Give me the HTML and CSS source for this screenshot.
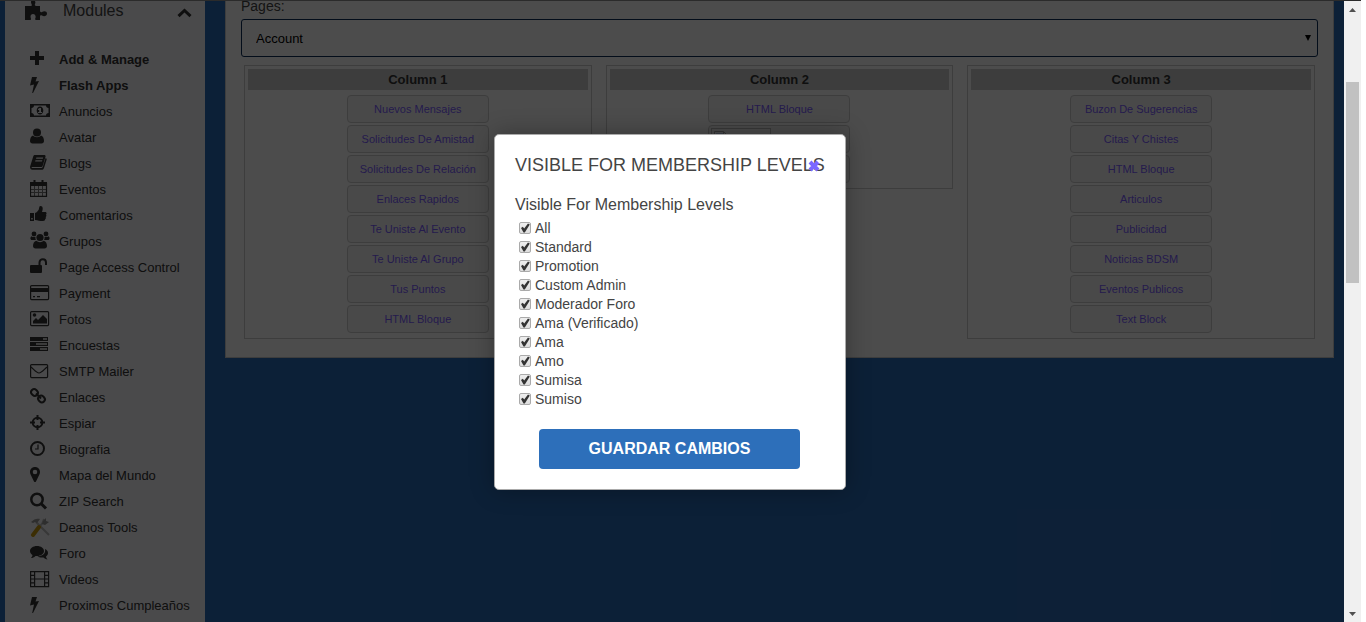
FILE: index.html
```html
<!DOCTYPE html>
<html lang="es">
<head>
<meta charset="utf-8">
<title>Modules</title>
<link rel="stylesheet" href="styles.css">
</head>
<body>
<div class="window">
<div class="page">
  <aside class="sidebar">
    <div class="side-head">
      <svg width="23" height="20" viewBox="0 0 23 20"><path d="M0 5h6c1 0 1-1 .5-2C5.500 1 6-1 8-1s3 2 2 4c-.5 1 0 2 1 2h4v5c0 1 1 1.500 2 1 2-1.500 5-1 5 1.500S19 16 17 14.500c-1-.6-2 0-2 1V19h-4c-1 0-1-1-.6-2 .8-2-.4-4-2.400-4s-3 2-2.200 4c.4 1 .2 2-.8 2H0z"/></svg>
      <span>Modules</span>
      <svg class="chev" width="15" height="10" viewBox="0 0 15 10"><path d="M1.500 8.200 7.500 2.500l6 5.700" class="line w3"/></svg>
    </div>
    <nav class="menu">
      <a href="#" class="strong"><svg viewBox="0 0 20 20"><path d="M5 2h4v5h5v4H9v5H5v-5H0V7h5z"/></svg>Add &amp; Manage</a>
      <a href="#" class="strong"><svg viewBox="0 0 20 20"><path d="M2 2h5L5.500 6.500 9 6 3 18h-.8L4 9.500 0 10.500z"/></svg>Flash Apps</a>
      <a href="#"><svg viewBox="0 0 20 20"><path fill-rule="evenodd" d="M0 3h20v13H0zM4 4.500C4 6 3 7 1.500 7v5c1.500 0 2.500 1 2.500 2.500h12c0-1.500 1-2.500 2.500-2.500V7C17 7 16 6 16 4.500z"/><path fill-rule="evenodd" d="M10 5.500c2 0 3.300 1.800 3.300 4s-1.300 4-3.300 4-3.300-1.800-3.300-4 1.300-4 3.300-4M9.500 7 8 8v1h1.200v2H8v1h4v-1h-1V7z"/></svg>Anuncios</a>
      <a href="#"><svg viewBox="0 0 20 20"><circle cx="7" cy="5.500" r="4"/><path d="M3 8.500c2 2.300 6 2.300 8 0 2 .5 3 3 3 5.500 0 1.500-1 2.500-2.500 2.500h-9C1 16.500 0 15.500 0 14c0-2.500 1-5 3-5.500"/></svg>Avatar</a>
      <a href="#"><svg viewBox="0 0 20 20"><path fill-rule="evenodd" d="M5 2h9c1.200 0 1.800.8 1.500 1.800l-2.700 8.700c-.3 1-1 1.500-2 1.500H2c-.8 0-.6.9.2.9h9c.8 0 1.300-.4 1.600-1.200L15.600 5c1 .4 1.200 1 1 1.800L14 14.900c-.4 1.200-1.300 1.900-2.500 1.900H2.300C.8 16.800-.2 15 .1 13.500L3.300 3.300C3.600 2.400 4.200 2 5 2m1.400 2.600L6 5.800h6.800l.4-1.200zM5.500 7.200l-.4 1.200h6.800l.4-1.200z"/></svg>Blogs</a>
      <a href="#"><svg viewBox="0 0 20 20"><path d="M0 3h17v4H0z"/><path class="line thin" d="M4.500 7v10M8.500 7v10M12.500 7v10M0 10.500h17M0 13.500h17"/><path class="line w1" d="M.5 4v13.300h16V4"/><path class="line w2" d="M4.500 1v4M12.500 1v4"/></svg>Eventos</a>
      <a href="#"><svg viewBox="0 0 20 20"><path fill-rule="evenodd" d="M0 8h4v8H0zM1.200 13v1.500h1.500V13zM5 8c2-.3 3-2.300 3.800-3.500C9.300 3 9 1 10.500 1c2.800 0 2.500 3.500 1.500 6h3c2 0 1.800 2 1 2.500.7 1 .3 2-.3 2.500.4 1 0 2-.6 2.300 0 1.200-.5 1.700-2.100 1.700-3.500 0-5-.5-8-1z"/></svg>Comentarios</a>
      <a href="#"><svg viewBox="0 0 20 20"><circle cx="4" cy="3" r="2.400"/><circle cx="16" cy="3" r="2.400"/><path d="M1.500 5.200c1.300 1 3 1.100 4 .5C5.300 7.500 5.500 8.300 6 9H2C0 9 0 6.200 1.500 5.200M18.500 5.200c-1.300 1-3 1.100-4 .5.200 1.800 0 2.600-.5 3.300h4c2 0 2-2.800.5-3.800"/><circle cx="10" cy="6.500" r="3.600"/><path d="M6.200 9.800c2.300 1.900 5.300 1.900 7.600 0 2 .5 3.200 2.700 3.200 5.200 0 1.500-1 2.500-2.500 2.500h-9C4 17.500 3 16.500 3 15c0-2.500 1.200-4.700 3.200-5.200"/></svg>Grupos</a>
      <a href="#"><svg viewBox="0 0 20 20"><rect y="8" width="12" height="8" rx="1"/><path class="line w2" d="M9.500 8V5.500c0-4.300 6.500-4.300 6.500 0V8"/></svg>Page Access Control</a>
      <a href="#"><svg viewBox="0 0 20 20"><rect class="line w1" x=".6" y="2.600" width="18" height="14" rx="1"/><path d="M0 5h19v4H0zM3 13h2v1.200H3zM7 13h3v1.200H7z"/></svg>Payment</a>
      <a href="#"><svg viewBox="0 0 20 20"><rect class="line w1" x=".6" y="2.600" width="18" height="14" rx="1"/><circle cx="4.500" cy="6" r="1.800"/><path d="M3 14.500V12l3-3 2 2 5-5 4 4v4.500z"/></svg>Fotos</a>
      <a href="#"><svg viewBox="0 0 20 20"><path fill-rule="evenodd" d="M0 2h18v4H0zm13 1.200v1.500h4V3.200zM0 7h18v4H0zm6 1.200v1.500h11V8.200zM0 12h18v4H0zm10 1.200v1.500h7v-1.500z"/></svg>Encuestas</a>
      <a href="#"><svg viewBox="0 0 20 20"><rect class="line w1" x=".6" y="3.600" width="17" height="13" rx="1"/><path class="line w1" d="M1 6c3 2.500 5.500 6 8 6s5-3.500 8-6"/></svg>SMTP Mailer</a>
      <a href="#"><svg viewBox="0 0 20 20"><rect class="line w2" x="1" y="2.500" width="7" height="6" rx="3" transform="rotate(45 4.500 5.500)"/><rect class="line w2" x="8" y="9" width="7" height="6" rx="3" transform="rotate(45 11.500 12)"/><path class="line w2" d="m6 6.500 5 5"/></svg>Enlaces</a>
      <a href="#"><svg viewBox="0 0 20 20"><circle class="line w2" cx="7.500" cy="9.500" r="4.800"/><path class="line w2" d="M7.500 2v5M7.500 12v5M0 9.500h5M10 9.500h5"/></svg>Espiar</a>
      <a href="#"><svg viewBox="0 0 20 20"><circle class="line w2" cx="7.500" cy="9.500" r="6.500"/><path class="line w1" d="M8 5.500V10H5"/></svg>Biografia</a>
      <a href="#"><svg viewBox="0 0 20 20"><path fill-rule="evenodd" d="M5 2c3 0 5 2.200 5 5 0 1-.2 1.800-.6 2.500L6 16.500c-.4.800-1.600.8-2 0L.6 9.500C.2 8.800 0 8 0 7c0-2.800 2-5 5-5m0 2.700a2.300 2.300 0 1 0 0 4.600 2.300 2.300 0 0 0 0-4.600"/></svg>Mapa del Mundo</a>
      <a href="#"><svg viewBox="0 0 20 20"><circle class="line zoom" cx="7" cy="8.500" r="5.700"/><path class="line w3" d="m11 12.500 5 5"/></svg>ZIP Search</a>
      <a href="#"><svg viewBox="0 0 20 20"><path class="tool-grey" d="M14 2 12.500 6 3 18M6 5l13 13"/><path class="tool-head" d="M1 5c3-3 6-4 9-3L7 6 5 5 3 6zM13 4l3-3v3l3 1-4 3-3-1z"/><path class="tool-gold" d="m9 10-6 8"/></svg>Deanos Tools</a>
      <a href="#"><svg viewBox="0 0 20 20"><path d="M7 3c4 0 7 2.200 7 5s-3 5-7 5l-1.500-.1C4 14.300 2.500 14.800 1 15c1-1 1.500-2 1.500-3C1 11 0 9.600 0 8c0-2.800 3-5 7-5"/><path d="M15 6c2 1 3 2.300 3 4 0 1.500-.8 2.500-2 3.500 0 1 .5 2 1.500 3-1.500-.2-3-.9-4-2-2 .3-4.500 0-6-1C12 13 16 11 15 6"/></svg>Foro</a>
      <a href="#"><svg viewBox="0 0 20 20"><path class="line w1" d="M.6 2.600h18v15H.6zM4.600 2.600v15M14.600 2.600v15M4.600 10h10M1 6.400h3.500M1 10h3.500M1 13.800h3.500M15 6.400h3.500M15 10h3.500M15 13.800h3.500"/></svg>Videos</a>
      <a href="#"><svg viewBox="0 0 20 20"><path d="M2 2h5L5.500 6.500 9 6 3 18h-.8L4 9.500 0 10.500z"/></svg>Proximos Cumpleaños</a>
    </nav>
  </aside>
  <main class="panel">
    <label class="pages-label" for="pages">Pages:</label>
    <div class="select-wrap"><select id="pages"><option>Account</option></select></div>
    <div class="columns">
      <section class="column"><h2>Column 1</h2>
        <button>Nuevos Mensajes</button><button>Solicitudes De Amistad</button><button>Solicitudes De Relación</button><button>Enlaces Rapidos</button><button>Te Uniste Al Evento</button><button>Te Uniste Al Grupo</button><button>Tus Puntos</button><button>HTML Bloque</button>
      </section>
      <section class="column"><h2>Column 2</h2>
        <button>HTML Bloque</button>
        <button class="with-image"><span class="missing"><svg width="16" height="16" viewBox="0 0 16 16"><path class="doc" d="M1.500 1.500h9l4 4v9h-13z"/><path class="sky" d="M3 3h7v8H3z"/><path class="doc" d="M10.500 1.500v4h4"/></svg></span></button>
        <button></button>
      </section>
      <section class="column"><h2>Column 3</h2>
        <button>Buzon De Sugerencias</button><button>Citas Y Chistes</button><button>HTML Bloque</button><button>Articulos</button><button>Publicidad</button><button>Noticias BDSM</button><button>Eventos Publicos</button><button>Text Block</button>
      </section>
    </div>
  </main>
  <div class="overlay">
    <form class="modal" role="dialog" aria-labelledby="dlg-title">
      <h1 id="dlg-title">VISIBLE FOR MEMBERSHIP LEVELS</h1>
      <button type="button" class="close" aria-label="Cerrar"><svg width="12" height="12" viewBox="0 0 12 12"><path d="m2 2 8 8M10 2l-8 8"/></svg></button>
      <fieldset>
        <legend>Visible For Membership Levels</legend>
        <label><input type="checkbox" checked>All</label>
        <label><input type="checkbox" checked>Standard</label>
        <label><input type="checkbox" checked>Promotion</label>
        <label><input type="checkbox" checked>Custom Admin</label>
        <label><input type="checkbox" checked>Moderador Foro</label>
        <label><input type="checkbox" checked>Ama (Verificado)</label>
        <label><input type="checkbox" checked>Ama</label>
        <label><input type="checkbox" checked>Amo</label>
        <label><input type="checkbox" checked>Sumisa</label>
        <label><input type="checkbox" checked>Sumiso</label>
      </fieldset>
      <button type="button" class="save">GUARDAR CAMBIOS</button>
    </form>
  </div>
</div>
<div class="scrollbar">
  <svg width="17" height="17" viewBox="0 0 17 17"><path d="M5 11h7L8.500 7z"/></svg>
  <div class="track"><div class="thumb"></div></div>
  <svg width="17" height="17" viewBox="0 0 17 17"><path d="M5 7h7l-3.500 4z"/></svg>
</div>
</div>
</body>
</html>
```
FILE: styles.css
```css
* { box-sizing: border-box; }
body {
  margin: 0;
  background: #fff;
  font-family: "Liberation Sans", Arial, sans-serif;
  color: #444;
}
.window {
  display: flex;
  height: 100vh;
  margin-right: 5px;
  border-top: 1px solid #2b2b2b;
  overflow: hidden;
}
.page {
  position: relative;
  flex: 1;
  display: flex;
  align-items: flex-start;
  gap: 20px;
  padding: 0 10px 0 5px;
  background: #2a6cba;
  overflow: hidden;
}
button, select { font-family: inherit; }

/* Sidebar */
.sidebar {
  align-self: stretch;
  width: 200px;
  flex: none;
  background: #f7f7fa;
}
.side-head {
  display: flex;
  align-items: center;
  height: 20px;
  margin-bottom: 25px;
  padding: 0 13px 0 20px;
  font-size: 16px;
}
.side-head span { flex: 1; margin-left: 15px; }
.side-head .chev { margin-top: 4px; }
.menu a {
  display: flex;
  align-items: center;
  gap: 9px;
  height: 26px;
  padding-left: 25px;
  font-size: 13px;
  color: #333;
  text-decoration: none;
  white-space: nowrap;
}
.menu svg { width: 20px; height: 20px; flex: none; }
.menu .strong { font-weight: bold; }
.sidebar svg { fill: #333; }
.sidebar svg .line { fill: none; stroke: #333; }
.sidebar svg .thin { stroke: #777; stroke-width: 1; }
.sidebar svg .w1 { stroke-width: 1.2; }
.sidebar svg .w2 { stroke-width: 2; }
.sidebar svg .zoom { stroke-width: 2.500; }
.sidebar svg .w3 { stroke-width: 3; }
.sidebar svg .tool-grey { fill: none; stroke: #bbb; stroke-width: 2; }
.sidebar svg .tool-head { fill: #999; }
.sidebar svg .tool-gold { fill: none; stroke: #c89b10; stroke-width: 4; stroke-linecap: round; }

/* Panel */
.panel {
  flex: 1;
  padding: 0 15px 18px;
  background: #fff;
  border: 1px solid #ccc;
  border-top: 0;
}
.pages-label {
  display: block;
  font-size: 14px;
  line-height: 10px;
  margin-bottom: 8px;
}
.select-wrap { position: relative; }
.select-wrap::after {
  content: "";
  position: absolute;
  right: 7px;
  top: 16px;
  border: 3px solid transparent;
  border-top: 6px solid #000;
  border-bottom: 0;
}
.select-wrap select {
  display: block;
  appearance: none;
  width: 100%;
  height: 38px;
  padding: 0 14px;
  border: 1px solid #0a2c58;
  border-radius: 3px;
  background: #fff;
  color: #000;
  font-size: 13px;
}
.columns {
  display: grid;
  grid-template-columns: repeat(3, 1fr);
  align-items: start;
  gap: 14px;
  margin: 8px 3px 0;
}
.column {
  display: flex;
  flex-direction: column;
  align-items: center;
  gap: 2px;
  padding: 3px 3px 5px;
  border: 1px solid #ccc;
}
.column h2 {
  align-self: stretch;
  margin: 0 0 3px;
  background: #ccc;
  color: #333;
  font-size: 13px;
  line-height: 21px;
  text-align: center;
}
.column button {
  width: 142px;
  height: 28px;
  padding: 0;
  border: 1px solid #ccc;
  border-radius: 4px;
  background: #f6f6f6;
  color: #7b5cff;
  font-size: 11px;
}
.column .with-image { display: flex; padding: 2px; }
.missing {
  width: 60px;
  height: 22px;
  padding: 1px;
  border: 1px solid #bbb;
}
.missing svg { display: block; }
.missing .doc { fill: none; stroke: #aaa; }
.missing .sky { fill: #c3d2ee; }

/* Dialog */
.overlay {
  position: absolute;
  inset: 0;
  display: flex;
  align-items: center;
  justify-content: center;
  padding-right: 4px;
  background: rgba(0, 0, 0, .7);
}
.modal {
  position: relative;
  width: 352px;
  padding: 20px;
  border: 1px solid #aaa;
  border-radius: 5px;
  background: #fff;
  box-shadow: 0 0 25px rgba(0, 0, 0, .3);
}
.modal h1 {
  margin: 0 0 20px;
  font-size: 18px;
  font-weight: normal;
  line-height: 20px;
  white-space: nowrap;
}
.close {
  position: absolute;
  top: 25px;
  right: 25px;
  padding: 0;
  border: 0;
  background: none;
}
.close svg { display: block; fill: none; stroke: #7b68ff; stroke-width: 4; }
.modal fieldset { margin: 0; padding: 0; border: 0; }
.modal legend { padding: 0 0 4px; font-size: 16px; line-height: 20px; }
.modal label {
  display: flex;
  align-items: center;
  gap: 4px;
  height: 19px;
  padding-left: 4px;
  font-size: 14px;
}
.modal input {
  appearance: none;
  width: 12px;
  height: 12px;
  margin: 0;
  border: 1px solid #aaa;
  border-radius: 2px;
  background: linear-gradient(#eee, #ddd);
}
.modal input:checked::before {
  content: "";
  display: block;
  height: 10px;
  background: #333;
  clip-path: polygon(10% 50%, 28% 38%, 42% 55%, 80% 5%, 98% 15%, 48% 95%, 35% 95%);
}
.save {
  display: block;
  width: 261px;
  height: 40px;
  margin: 20px auto 0 24px;
  border: 0;
  border-radius: 4px;
  background: #2d6fba;
  color: #fff;
  font-size: 16px;
  font-weight: bold;
}

/* Scrollbar */
.scrollbar {
  display: flex;
  flex-direction: column;
  width: 17px;
  background: #f0f0f0;
}
.scrollbar svg { flex: none; fill: #505050; }
.track { flex: 1; padding: 64px 2px 0; }
.thumb { height: 201px; background: #c1c1c1; }
```
